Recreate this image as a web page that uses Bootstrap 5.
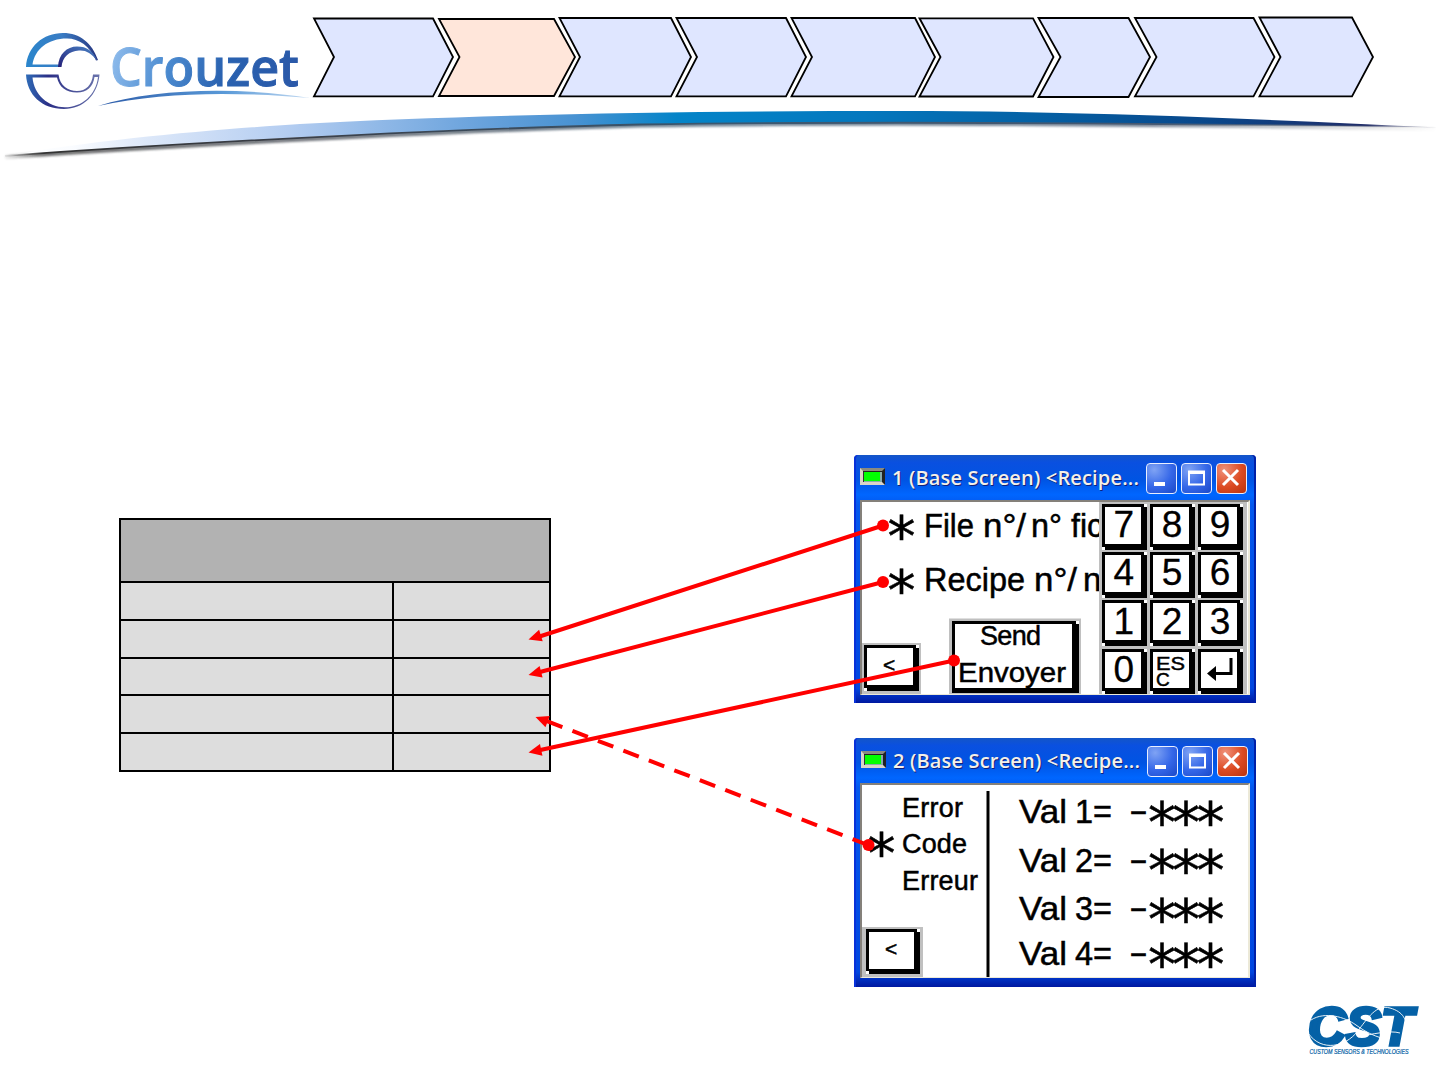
<!DOCTYPE html>
<html lang="en">
<head>
<meta charset="utf-8">
<meta name="viewport" content="width=device-width, initial-scale=1">
<title>Crouzet - Recipe</title>
<link rel="stylesheet" href="https://cdn.jsdelivr.net/npm/bootstrap@5.3.0/dist/css/bootstrap.min.css">
<style>
body{background:#fff;color:#000;font-family:"Liberation Sans",Arial,sans-serif}
svg{display:block;flex:none}
svg text{white-space:pre}
.slide{width:1440px;height:1080px}
.swoosh{height:65px;margin-top:-10px}
.stage{padding:290px 184px 0 119px}
.vars{width:432px;height:254px;margin-top:63px;border-collapse:collapse;table-layout:fixed}
.vars th,.vars td{border:2px solid #000;padding:0}
.vars th{background:#b2b2b2}
.vars td{background:#ddd}
.windows{gap:35px}
.win{width:402px;height:248px;padding:0 6px 8px;background:linear-gradient(180deg,#1456c8 0,#0a50e0 3%,#0054e3 10%,#0066ff 16%,#0358ee 20%,#0046e0 94%,#0018a0 100%);box-shadow:inset 2px 0 #0831d9,inset -2px 0 #0020a8;border-radius:4px 4px 0 0}
.win.second{height:249px}
.titlebar{height:45px;padding:2px 3px 0 0}
.titletext{font-family:"Open Sans",sans-serif;font-size:20px;line-height:34px;font-weight:600;color:#f4f0e8;text-shadow:1px 1px #10207a;white-space:pre;margin:-1px 0 0 7px;letter-spacing:.17px}
.lamp{width:25px;height:17px;margin-top:-4px;background:#0f0;border:3px solid;border-color:#8a8a80 #222 #d8d4c8 #d8d4c8;box-shadow:inset 0 1px #222,inset 1px 0 #333,inset -2px -1px #8aa}
.caps{gap:4px}
.cap-btn{width:31px;height:31px;border:1.5px solid #e9efff;border-radius:4px;background:radial-gradient(circle at 25% 20%,#7fa3f4,#3567e8 55%,#1a48c8)}
.cap-btn.x{background:radial-gradient(circle at 25% 20%,#f0917a,#dc4a22 55%,#b8320e)}
.lcd{height:195px;background:#fff;border:solid;border-width:2px 2px 1px 2px;border-color:#84807a #ece9d8 #ece9d8 #84807a;overflow:hidden}
.inked{stroke:#000;stroke-width:.5}
.keypad{width:148px;display:grid;grid-template-columns:repeat(3,45.5px);grid-auto-rows:45.5px;gap:2.7px;padding:2px 0 0 2.5px;background:#c0c0c0}
.keycap{position:relative;border:solid #000;border-width:3px 6px 6px 3px;background:#fff;display:flex;align-items:center;justify-content:center;font-size:37px;line-height:36px;-webkit-text-stroke:.3px #000}
.keycap::before,.keycap::after{content:"";position:absolute;width:3px;height:3px;background:#fff}
.keycap::before{right:-6px;top:-3px}
.keycap::after{left:-3px;bottom:-6px}
.keycap span{transform:translate(1px,0)}
.wires{pointer-events:none}
.brand2{right:18px;bottom:20px}
</style>
<script src="https://cdn.jsdelivr.net/npm/bootstrap@5.3.0/dist/js/bootstrap.bundle.min.js"></script>
</head>
<body class="m-0">
<div class="slide position-relative overflow-hidden">
  <header class="d-flex">
    <svg width="312" height="110" viewBox="0 0 312 110">
      <defs>
        <linearGradient id="gname" gradientUnits="userSpaceOnUse" x1="113" y1="45" x2="298" y2="86"><stop offset="0" stop-color="#8fbcec"/><stop offset=".3" stop-color="#4b8bd0"/><stop offset=".6" stop-color="#2a62b0"/><stop offset="1" stop-color="#2a58a8"/></linearGradient>
        <linearGradient id="gtop" x1="0" y1="0" x2="1" y2="0"><stop offset="0" stop-color="#2a86cc"/><stop offset=".5" stop-color="#3a7cc4"/><stop offset="1" stop-color="#27347e"/></linearGradient>
        <linearGradient id="gin" x1="0" y1="1" x2="1" y2="0"><stop offset="0" stop-color="#241f78"/><stop offset="1" stop-color="#4a86c8"/></linearGradient>
        <linearGradient id="gbot" x1="0" y1="0" x2="1" y2="0"><stop offset="0" stop-color="#2f6cb8"/><stop offset=".3" stop-color="#2b2f86"/><stop offset="1" stop-color="#6a74ac"/></linearGradient>
        <linearGradient id="garc" x1="0" y1="0" x2="1" y2="0"><stop offset="0" stop-color="#2c5ba8"/><stop offset=".6" stop-color="#5a9ad8"/><stop offset="1" stop-color="#c5dbf2"/></linearGradient>
      </defs>
      <path fill="url(#gtop)" d="M26 67C27 47 43 33 63 33C80 33 92 43 98 60L96 60.500C90 46 79 38.500 67 38.500C48 38.500 35 49 32.500 64.500H59V67Z"/>
      <path fill="url(#gin)" d="M58 67C58.500 54 67 46.500 77 46.500C87 46.500 93 51 97.500 61C91 53 86 50 79 50.500C69 51 62.500 57 61.500 67Z"/>
      <path fill="url(#gbot)" d="M26 74.500H58.500C60 86 68 91 77 91C86 91 92 85 93 74.500H99.500C98 95 83 109 64 109C42 109 27 95 26 74.500ZM32.500 77.500C34 95 48 107 65 107.300C82 107.300 96 95 98 77H94.500C93 87 87 92.500 77 92.500C66 92.500 59 87 57 77.500Z"/>
      <text x="110" y="86" font-family="Open Sans" font-weight="600" font-size="53" textLength="189" lengthAdjust="spacingAndGlyphs" fill="url(#gname)" stroke="url(#gname)" stroke-width="1">Crouzet</text>
      <path fill="url(#garc)" d="M98 106C155 88 240 87 310 98C240 92 165 91 98 106Z"/>
    </svg>
    <svg width="1128" height="110" viewBox="312 0 1128 110" fill="#dfe6ff" stroke="#000" stroke-width="1.800">
      <path d="M314 18.500H433L453 57L433 96.300H314L334 57Z"/>
      <path fill="#ffe6da" d="M439 19H554L575 57L554 96H439L459.500 57Z"/>
      <path d="M559.500 18H671L691 57L671 96.300H559.500L580 57Z"/>
      <path d="M676.500 18H786L806 57L786 96.300H676.500L697 57Z"/>
      <path d="M791.500 18H915L935 57L915 96.300H791.500L812 57Z"/>
      <path d="M919.500 18.300H1033L1053.500 57L1033 96.500H919.500L940.500 57Z"/>
      <path d="M1038.500 18H1128.500L1150 57L1128.500 97H1038.500L1060.500 57Z"/>
      <path d="M1135 18H1253.500L1274.500 57L1253.500 96.300H1135L1156.500 57Z"/>
      <path d="M1259.500 17.500H1352L1373 57L1352 96.300H1259.500L1280.500 57Z"/>
    </svg>
  </header>
  <svg class="swoosh" width="1440" height="65" viewBox="0 100 1440 65">
    <defs>
      <linearGradient id="sw" gradientUnits="userSpaceOnUse" x1="0" y1="0" x2="1440" y2="0"><stop offset="0" stop-color="#fff"/><stop offset=".05" stop-color="#fafcff"/><stop offset=".1" stop-color="#dde8f9"/><stop offset=".2" stop-color="#b4cdf1"/><stop offset=".32" stop-color="#70a6de"/><stop offset=".4" stop-color="#4892d2"/><stop offset=".47" stop-color="#0484c8"/><stop offset=".6" stop-color="#0478be"/><stop offset=".72" stop-color="#0460a4"/><stop offset=".85" stop-color="#0a4588"/><stop offset=".95" stop-color="#202c68"/><stop offset="1" stop-color="#aab" stop-opacity=".3"/></linearGradient>
      <linearGradient id="sh" gradientUnits="userSpaceOnUse" x1="0" y1="0" x2="1440" y2="0"><stop offset="0" stop-color="#333" stop-opacity="0"/><stop offset=".03" stop-color="#333"/><stop offset=".2" stop-color="#3a3f48"/><stop offset=".5" stop-color="#3c5870"/><stop offset=".8" stop-color="#465870"/><stop offset="1" stop-color="#888" stop-opacity="0"/></linearGradient>
      <filter id="soft" x="-5%" y="-50%" width="110%" height="200%"><feGaussianBlur stdDeviation="1.300"/></filter>
    </defs>
    <path d="M5 157C230 142 480 130 640 125.500C880 122 1150 124 1435 129" fill="none" stroke="url(#sh)" stroke-width="4" opacity=".7" filter="url(#soft)"/>
    <path fill="url(#sw)" d="M5 156C100 139 220 129 300 124C480 114 700 111 900 111C1100 111 1270 120 1440 127.500C1150 123.500 880 121 640 124.500C480 128 230 139 5 156Z"/>
    <path d="M5 155.800C230 140 480 128 640 124.500C880 121 1150 123 1435 127.500" fill="none" stroke="url(#sh)" stroke-width="1.800"/>
  </svg>

  <main class="stage d-flex justify-content-between align-items-start">
    <table class="vars">
      <colgroup><col style="width:273px"><col style="width:157px"></colgroup>
      <thead><tr style="height:63px"><th colspan="2"></th></tr></thead>
      <tbody>
        <tr style="height:38px"><td></td><td></td></tr>
        <tr style="height:38px"><td></td><td></td></tr>
        <tr style="height:37px"><td></td><td></td></tr>
        <tr style="height:38px"><td></td><td></td></tr>
        <tr style="height:38px"><td></td><td></td></tr>
      </tbody>
    </table>

    <div class="windows d-flex flex-column">
      <section class="win">
        <div class="titlebar d-flex align-items-center">
          <div class="lamp"></div>
          <div class="titletext">1 (Base Screen) &lt;Recipe...</div>
          <div class="caps d-flex ms-auto">
            <div class="cap-btn"><svg width="28" height="28"><path fill="#fff" d="M7 18h11v4H7z"/></svg></div>
            <div class="cap-btn"><svg width="28" height="28"><path fill="none" stroke="#fff" stroke-width="2" d="M7 7.500h15v13H7zM7 9h15"/></svg></div>
            <div class="cap-btn x"><svg width="28" height="28"><path stroke="#fff" stroke-width="3" d="M6 6l15 15M21 6L6 21"/></svg></div>
          </div>
        </div>
        <div class="lcd d-flex">
          <svg width="237" height="193" viewBox="862 502 237 193" font-family="Liberation Sans" font-size="33">
            <g font-family="DejaVu Sans" font-size="56" class="inked"><text x="887.500" y="555.500">*</text><text x="887.500" y="609.500">*</text></g>
            <g class="inked">
            <text x="924" y="537" textLength="50" lengthAdjust="spacingAndGlyphs">File</text>
            <text x="983" y="537" textLength="43" lengthAdjust="spacingAndGlyphs">n°/</text>
            <text x="1031" y="537" textLength="31" lengthAdjust="spacingAndGlyphs">n°</text>
            <text x="1071" y="537" textLength="32" lengthAdjust="spacingAndGlyphs">fic</text>
            <text x="924" y="591" textLength="101" lengthAdjust="spacingAndGlyphs">Recipe</text>
            <text x="1034" y="591" textLength="43" lengthAdjust="spacingAndGlyphs">n°/</text>
            <text x="1083" y="591">n</text>
            </g>
            <g><path fill="#c0c0c0" d="M862 643h59v52h-59zM949 618.500h132V695H949z"/><path d="M864 645h55v46h-55zM952 621h127v72H952z"/><path fill="#fff" d="M867 648h46v37h-46zM955 624h117v64H955zM916 645h3v3h-3zM1076 621h3v3h-3zM864 688h3v3h-3z"/></g>
            <text x="883" y="672" font-size="21" textLength="13" class="inked">&lt;</text>
            <g font-size="27" class="inked"><text x="980" y="645" textLength="61">Send</text><text x="958" y="682" textLength="108" lengthAdjust="spacingAndGlyphs">Envoyer</text></g>
          </svg>
          <div class="keypad">
            <div class="keycap"><span>7</span></div><div class="keycap"><span>8</span></div><div class="keycap"><span>9</span></div>
            <div class="keycap"><span>4</span></div><div class="keycap"><span>5</span></div><div class="keycap"><span>6</span></div>
            <div class="keycap"><span>1</span></div><div class="keycap"><span>2</span></div><div class="keycap"><span>3</span></div>
            <div class="keycap"><span>0</span></div>
            <div class="keycap"><svg width="36" height="36" font-family="Liberation Sans" font-size="19" class="inked"><text x="3" y="17.500" textLength="29" lengthAdjust="spacingAndGlyphs">ES</text><text x="3" y="33.500">C</text></svg></div>
            <div class="keycap"><svg width="36" height="36"><path d="M30 6V21.500H8" fill="none" stroke="#000" stroke-width="3"/><path d="M6 21.500L15 14V29Z"/></svg></div>
          </div>
        </div>
      </section>

      <section class="win second">
        <div class="titlebar d-flex align-items-center pe-1">
          <div class="lamp ms-0 position-relative" style="left:1px"></div>
          <div class="titletext ms-2">2 (Base Screen) &lt;Recipe...</div>
          <div class="caps d-flex ms-auto" style="margin-right:-2px">
            <div class="cap-btn"><svg width="28" height="28"><path fill="#fff" d="M7 18h11v4H7z"/></svg></div>
            <div class="cap-btn"><svg width="28" height="28"><path fill="none" stroke="#fff" stroke-width="2" d="M7 7.500h15v13H7zM7 9h15"/></svg></div>
            <div class="cap-btn x"><svg width="28" height="28"><path stroke="#fff" stroke-width="3" d="M6 6l15 15M21 6L6 21"/></svg></div>
          </div>
        </div>
        <div class="lcd">
          <svg width="386" height="193" viewBox="862 785 386 193" font-family="Liberation Sans">
            <g font-size="27" class="inked"><text x="902" y="817" textLength="61">Error</text><text x="902" y="853" textLength="65">Code</text><text x="902" y="890" textLength="76">Erreur</text></g>
            <path d="M986.500 791h3V978h-3z"/>
            <path fill="#c0c0c0" d="M862 927h61v50h-61z"/><path d="M866 929h54v45h-54z"/><path fill="#fff" d="M869 932h45v37h-45zM917 929h3v3h-3zM866 971h3v3h-3z"/>
            <text x="885" y="956" font-size="21" class="inked">&lt;</text>
            <g font-size="33" class="inked">
              <text x="1019" y="823" textLength="48" lengthAdjust="spacingAndGlyphs">Val</text><text x="1075" y="823" textLength="37" lengthAdjust="spacingAndGlyphs">1=</text>
              <text x="1019" y="871.500" textLength="48" lengthAdjust="spacingAndGlyphs">Val</text><text x="1075" y="871.500" textLength="37" lengthAdjust="spacingAndGlyphs">2=</text>
              <text x="1019" y="920" textLength="48" lengthAdjust="spacingAndGlyphs">Val</text><text x="1075" y="920" textLength="37" lengthAdjust="spacingAndGlyphs">3=</text>
              <text x="1019" y="965" textLength="48" lengthAdjust="spacingAndGlyphs">Val</text><text x="1075" y="965" textLength="37" lengthAdjust="spacingAndGlyphs">4=</text>
              <text x="1129" y="822" textLength="19" lengthAdjust="spacingAndGlyphs">-</text><text x="1129" y="870.500" textLength="19" lengthAdjust="spacingAndGlyphs">-</text><text x="1129" y="919" textLength="19" lengthAdjust="spacingAndGlyphs">-</text><text x="1129" y="964" textLength="19" lengthAdjust="spacingAndGlyphs">-</text>
            </g>
            <g font-family="DejaVu Sans" font-size="56" class="inked"><text x="867.500" y="872.500">*</text>
              <text x="1148 1172 1196.500" y="841.500">***</text><text x="1148 1172 1196.500" y="890">***</text><text x="1148 1172 1196.500" y="938.500">***</text><text x="1148 1172 1196.500" y="983.500">***</text></g>
          </svg>
        </div>
      </section>
    </div>
  </main>

  <svg class="wires position-absolute top-0 start-0" width="1440" height="1080" viewBox="0 0 1440 1080">
    <g fill="none" stroke="#f00" stroke-width="4">
      <path d="M538 637L883 525.500M538 672.500L883 582M538 750.500L954 660.500"/>
      <path stroke-dasharray="16.500 10.800" d="M868 845L544 720"/>
    </g>
    <g fill="#f00">
      <circle cx="883" cy="525.500" r="6"/><circle cx="883" cy="582" r="6"/><circle cx="954" cy="660.500" r="6"/><circle cx="868.500" cy="845" r="6"/>
      <path d="M0 0L13-6V6Z" transform="translate(528.500 639.500) rotate(-17.500)"/>
      <path d="M0 0L13-6V6Z" transform="translate(528.500 675) rotate(-14.500)"/>
      <path d="M0 0L13-6V6Z" transform="translate(528.500 752.500) rotate(-12)"/>
      <path d="M0 0L13-6V6Z" transform="translate(535.500 717) rotate(21)"/>
    </g>
  </svg>

  <svg class="brand2 position-absolute" width="116" height="60" viewBox="1306 1000 116 60" font-family="Liberation Sans" fill="#0561a6">
    <text x="1308" y="1045" font-weight="700" font-style="italic" font-size="54" textLength="105" lengthAdjust="spacingAndGlyphs" stroke="#0561a6" stroke-width="3.500">CST</text>
    <path fill="none" stroke="#fff" stroke-width=".9" d="M1311 1020C1325 1011 1345 1017 1356 1025S1376 1037 1389 1040M1308 1033C1322 1053 1346 1046 1357 1032S1376 1004 1390 1008S1406 1020 1408 1030M1358 1037C1372 1034 1390 1030 1400 1033"/>
    <text x="1309.500" y="1054" font-style="italic" font-size="6.500" textLength="99" lengthAdjust="spacingAndGlyphs" stroke="#0561a6" stroke-width=".2">CUSTOM SENSORS &amp; TECHNOLOGIES</text>
  </svg>
</div>
</body>
</html>
